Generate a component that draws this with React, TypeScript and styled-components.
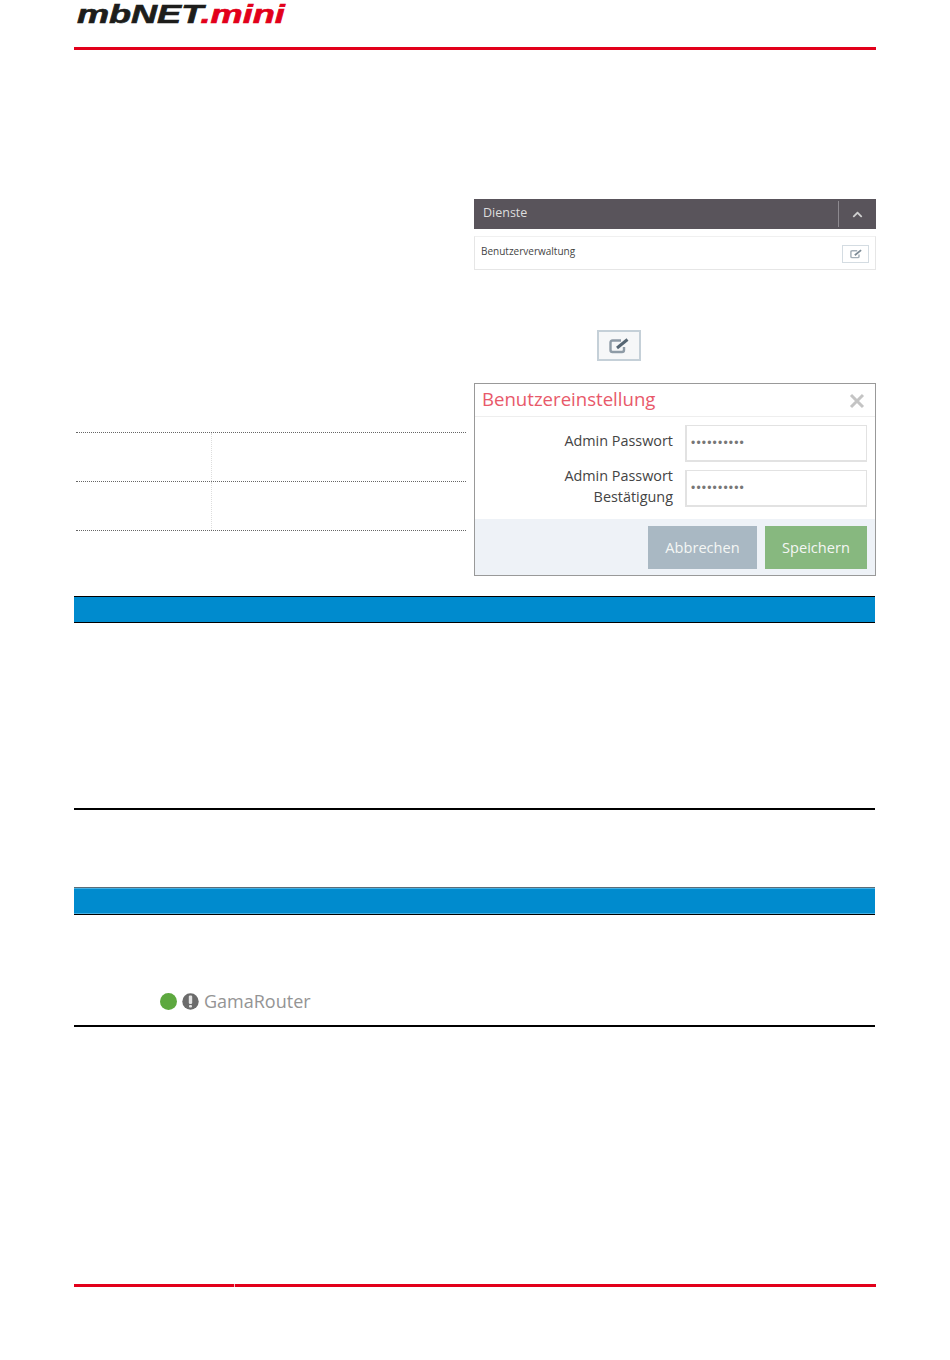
import React from 'react'
import styled, { createGlobalStyle } from 'styled-components'
import { FaChevronUp } from 'react-icons/fa'

const GlobalStyle = createGlobalStyle`
  html, body {
    margin: 0;
    padding: 0;
    background: #fff;
    font-family: "Open Sans", "Liberation Sans", sans-serif;
  }
`

const Page = styled.div`
  width: 802px;
  height: 1360px;
  margin-left: 74px;
  overflow: hidden;
`

const Header = styled.header`
  height: 47px;
  border-bottom: 3px solid #e2001a;
`

const Logo = styled.div`
  padding-left: 2px;
  font-family: "Liberation Sans", Arial, sans-serif;
  font-size: 25px;
  line-height: 28px;
  font-weight: 700;
  font-style: italic;
  color: #1d1d1b;
  transform: scaleX(1.444);
  transform-origin: left top;
  white-space: nowrap;
  -webkit-text-stroke: 0.6px currentColor;
`

const LogoAccent = styled.span`
  color: #e2001a;
`

const TopSection = styled.section`
  display: grid;
  grid-template-columns: 400px 402px;
  height: 546px;
`

const LeftColumn = styled.div`
  padding: 382px 8px 0 2px;
`

const InfoRow = styled.div`
  display: grid;
  grid-template-columns: 135px 1fr;
  height: 48px;
  border-top: 1px dotted #666;

  &:last-child {
    height: 0;
  }
`

const InfoCell = styled.div`
  & + & {
    border-left: 1px dotted #ddd;
  }
`

const RightColumn = styled.div`
  padding-top: 149px;
`

const ServiceBar = styled.div`
  display: flex;
  align-items: center;
  height: 30px;
  background: #59545b;
  color: #dedede;
  font-size: 12.5px;
`

const ServiceTitle = styled.span`
  flex: 1;
  padding: 0 0 3px 9px;
`

const ServiceToggle = styled.span`
  display: flex;
  align-items: center;
  justify-content: center;
  width: 37px;
  height: 26px;
  border-left: 1px solid #8d898f;
  color: #cfcfcf;
  font-size: 11px;
  stroke: currentColor;
  stroke-width: 30px;
`

const ServiceRow = styled.div`
  display: flex;
  align-items: center;
  justify-content: space-between;
  box-sizing: border-box;
  height: 34px;
  margin-top: 7px;
  padding: 0 6px;
  border: 1px solid #e6e6e6;
  border-top-color: #f0f0f0;
  color: #444;
  font-size: 10px;
`

const ServiceName = styled.span`
  margin-bottom: 4px;
`

const EditButton = styled.span<{ $large?: boolean }>`
  display: flex;
  align-items: center;
  justify-content: center;
  box-sizing: border-box;
  width: ${p => (p.$large ? '44px' : '27px')};
  height: ${p => (p.$large ? '31px' : '18px')};
  margin-top: ${p => (p.$large ? '0' : '2px')};
  border: ${p => (p.$large ? '2px solid #c5d0d8' : '1px solid #d4dce2')};
  background: ${p => (p.$large ? '#f6f7f8' : '#fff')};
`

const EditIconSvg = styled.svg<{ $large?: boolean }>`
  width: ${p => (p.$large ? '20px' : '12px')};
  height: ${p => (p.$large ? '16px' : '10px')};
`

const EditHolder = styled.div`
  display: flex;
  padding: 60px 0 0 123px;
`

const Modal = styled.div`
  box-sizing: border-box;
  height: 193px;
  margin-top: 22px;
  border: 1px solid #999;
`

const ModalHeader = styled.div`
  display: flex;
  align-items: center;
  justify-content: space-between;
  box-sizing: border-box;
  height: 33px;
  padding: 0 10px 0 7px;
  border-bottom: 1px solid #eeeeee;
`

const ModalTitle = styled.h3`
  margin: 0 0 2px;
  color: #e8596a;
  font-size: 18.6px;
  font-weight: 400;
  line-height: 30px;
`

const CloseIcon = styled.svg`
  width: 16px;
  height: 16px;
  margin-top: 1px;
`

const ModalBody = styled.div`
  display: flex;
  flex-direction: column;
  gap: 9px;
  box-sizing: border-box;
  height: 102px;
  padding: 8px 8px 0 0;
`

const FormRow = styled.div`
  display: grid;
  grid-template-columns: 198px 182px;
  grid-template-rows: 36px;
  column-gap: 12px;
  align-items: center;
`

const FormLabel = styled.label`
  margin-bottom: 5px;
  color: #444;
  font-size: 14.4px;
  line-height: 21px;
  text-align: right;
`

const FormInput = styled.input`
  box-sizing: border-box;
  width: 182px;
  height: 37px;
  padding: 0 4px;
  border: 1px solid #e2e2e2;
  border-width: 1px 1px 2px 2px;
  outline: none;
  color: #777;
  font-size: 12px;
  letter-spacing: 1.2px;
  font-family: "Liberation Sans", sans-serif;
`

const ModalFooter = styled.div`
  display: flex;
  justify-content: flex-end;
  gap: 8px;
  height: 56px;
  padding: 7px 8px 0 0;
  box-sizing: border-box;
  background: #eef2f7;
`

const FooterButton = styled.span<{ $color: string; $width: number }>`
  display: flex;
  align-items: center;
  justify-content: center;
  width: ${p => p.$width}px;
  height: 43px;
  padding-bottom: 2px;
  box-sizing: border-box;
  background: ${p => p.$color};
  color: #f4f6f4;
  font-size: 14.6px;
`

const BlueBar = styled.div<{ $glossy?: boolean }>`
  box-sizing: border-box;
  height: ${p => (p.$glossy ? '28px' : '27px')};
  margin-right: 1px;
  background: #008bce;
  border-top: 1px solid ${p => (p.$glossy ? '#5a6d78' : '#000')};
  border-bottom: 1px solid #000;
  box-shadow: ${p => (p.$glossy ? 'inset 0 1px 0 #45b0e3, inset 0 -1px 0 #45b0e3' : 'none')};
`

const BlackRule = styled.div`
  height: 2px;
  margin-right: 1px;
  background: #000;
`

const FirstBlock = styled.section`
  height: 185px;
`

const SecondSection = styled.section`
  margin-top: 77px;
`

const SecondBlock = styled.div`
  display: flex;
  align-items: flex-end;
  gap: 5px;
  box-sizing: border-box;
  height: 110px;
  padding: 0 0 13px 86px;
`

const StatusDot = styled.span`
  width: 17px;
  height: 17px;
  margin-bottom: 2px;
  border-radius: 50%;
  background: #5da83f;
`

const InfoIcon = styled.svg`
  width: 17px;
  height: 17px;
  margin-bottom: 2px;
`

const RouterName = styled.span`
  color: #949494;
  font-size: 18px;
  line-height: 21px;
`

const FooterLine = styled.div`
  height: 3px;
  margin-top: 257px;
  background: linear-gradient(to right, #e2001a 160px, #f5b5bd 160px, #f5b5bd 161px, #e2001a 161px);
`

const EditIcon: React.FC<{ large?: boolean }> = ({ large }) => (
  <EditIconSvg $large={large} viewBox="0 0 20 16">
    <path
      d="M12 2.5 H3.5 Q1.5 2.5 1.5 4.5 V12 Q1.5 14 3.5 14 H13 Q15 14 15 12 V9"
      fill="none"
      stroke={large ? '#8e9ba6' : '#a3aeb7'}
      strokeWidth="2.4"
    />
    <path d="M8 10 L18.5 1.5" fill="none" stroke={large ? '#566673' : '#7d8b96'} strokeWidth="3" />
  </EditIconSvg>
)

const App: React.FC = () => {
  return (
    <Page>
      <GlobalStyle />
      <Header>
        <Logo>
          mbNET<LogoAccent>.mini</LogoAccent>
        </Logo>
      </Header>

      <TopSection>
        <LeftColumn>
          <InfoRow>
            <InfoCell />
            <InfoCell />
          </InfoRow>
          <InfoRow>
            <InfoCell />
            <InfoCell />
          </InfoRow>
          <InfoRow />
        </LeftColumn>

        <RightColumn>
          <ServiceBar>
            <ServiceTitle>Dienste</ServiceTitle>
            <ServiceToggle>
              <FaChevronUp />
            </ServiceToggle>
          </ServiceBar>
          <ServiceRow>
            <ServiceName>Benutzerverwaltung</ServiceName>
            <EditButton>
              <EditIcon />
            </EditButton>
          </ServiceRow>

          <EditHolder>
            <EditButton $large>
              <EditIcon large />
            </EditButton>
          </EditHolder>

          <Modal>
            <ModalHeader>
              <ModalTitle>Benutzereinstellung</ModalTitle>
              <CloseIcon viewBox="0 0 16 16">
                <path d="M2 2 L14 14 M14 2 L2 14" stroke="#c4c4c4" strokeWidth="3" fill="none" />
              </CloseIcon>
            </ModalHeader>
            <ModalBody>
              <FormRow>
                <FormLabel>Admin Passwort</FormLabel>
                <FormInput type="password" defaultValue="1234567890" readOnly />
              </FormRow>
              <FormRow>
                <FormLabel>
                  Admin Passwort
                  <br />
                  Bestätigung
                </FormLabel>
                <FormInput type="password" defaultValue="1234567890" readOnly />
              </FormRow>
            </ModalBody>
            <ModalFooter>
              <FooterButton $color="#a9b8c3" $width={109}>Abbrechen</FooterButton>
              <FooterButton $color="#87b87f" $width={102}>Speichern</FooterButton>
            </ModalFooter>
          </Modal>
        </RightColumn>
      </TopSection>

      <BlueBar />
      <FirstBlock />
      <BlackRule />

      <SecondSection>
        <BlueBar $glossy />
        <SecondBlock>
          <StatusDot />
          <InfoIcon viewBox="0 0 17 17">
            <circle cx="8.5" cy="8.5" r="8.2" fill="#6b6b6b" />
            <rect x="6.8" y="2.5" width="3.4" height="8.5" rx="1.2" fill="#e4e4e4" />
            <rect x="7" y="12" width="3" height="2.5" rx="1" fill="#e4e4e4" />
          </InfoIcon>
          <RouterName>GamaRouter</RouterName>
        </SecondBlock>
        <BlackRule />
      </SecondSection>

      <FooterLine />
    </Page>
  )
}

export default App
